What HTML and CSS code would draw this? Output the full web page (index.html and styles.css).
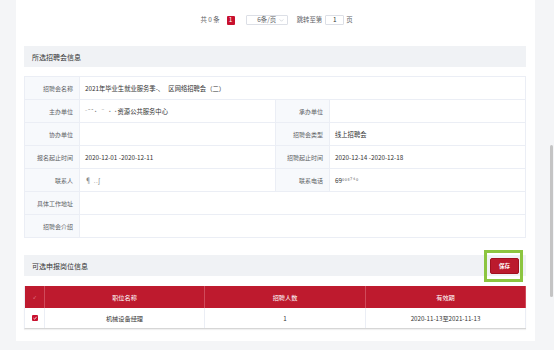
FILE: index.html
```html
<!DOCTYPE html>
<html lang="zh">
<head>
<meta charset="utf-8">
<link rel="stylesheet" href="styles.css">
</head>
<body>
<div class="page">
  <main class="panel">
    <div class="pager">
      <span class="total">共 0 条</span>
      <span class="cur">1</span>
      <span class="size">6条/页<svg class="arrow" viewBox="0 0 6 4" width="5" height="3"><path d="M0.5 0.5 L3 3 L5.5 0.5" fill="none" stroke="#c0c4cc" stroke-width="0.8"/></svg></span>
      <span class="jump">跳转至第</span>
      <span class="inp">1</span>
      <span class="unit">页</span>
    </div>

    <div class="sec-head"><span>所选招聘会信息</span></div>
    <div class="info">
      <div class="lbl">招聘会名称</div><div class="val span3">2021年毕业生就业服务季-、&nbsp;&nbsp;&nbsp;区网络招聘会（二）</div>
      <div class="lbl">主办单位</div><div class="val"><span class="blur">⁻˜ˆ˙ ˉ ˙ ˙</span>资源公共服务中心</div>
      <div class="lbl">承办单位</div><div class="val"></div>
      <div class="lbl">协办单位</div><div class="val"></div>
      <div class="lbl">招聘会类型</div><div class="val">线上招聘会</div>
      <div class="lbl">报名起止时间</div><div class="val">2020-12-01 -2020-12-11</div>
      <div class="lbl">招聘起止时间</div><div class="val">2020-12-14 -2020-12-18</div>
      <div class="lbl">联系人</div><div class="val"><span class="blur">¶ ..ʃ</span></div>
      <div class="lbl">联系电话</div><div class="val">69<span class="blur">⁰⁰⁵⁷⁴⁰</span></div>
      <div class="lbl">具体工作地址</div><div class="val span3"></div>
      <div class="lbl">招聘会介绍</div><div class="val span3"></div>
    </div>

    <div class="sec-head sec-head2"><span>可选申报岗位信息</span><button class="btn">保存</button></div>
    <div class="jobs">
      <div class="th chk"><span class="tick">✓</span></div>
      <div class="th">职位名称</div>
      <div class="th">招聘人数</div>
      <div class="th">有效期</div>
      <div class="td chk"><span class="box"><svg viewBox="0 0 6 6" width="6" height="6"><path d="M1.5 3.2 L2.6 4.2 L4.6 1.8" fill="none" stroke="#fff" stroke-width="0.8"/></svg></span></div>
      <div class="td">机械设备经理</div>
      <div class="td">1</div>
      <div class="td">2020-11-13至2021-11-13</div>
    </div>
  </main>
  <div class="scroll"><div class="thumb"></div></div>
</div>
</body>
</html>
```

FILE: styles.css
```css
* { box-sizing: border-box; }
html, body {
  margin: 0;
  padding: 0;
  height: 350px;
  overflow: hidden;
  background: #f4f5f7;
  font-family: "Noto Sans CJK SC", "Noto Sans", sans-serif;
  color: #333;
}
.page {
  display: flex;
  align-items: flex-start;
  padding-left: 16px;
}
.panel {
  width: 519px;
  background: #fff;
  padding: 0 9px 12px 8px;
}
.pager {
  height: 40px;
  display: flex;
  justify-content: center;
  align-items: center;
  font-size: 6.4px;
  line-height: 1;
  color: #606266;
  padding-left: 3px;
}
.total { margin-right: 7px; }
.cur {
  width: 8px;
  height: 9px;
  background: #c8102e;
  color: #fff;
  display: flex;
  align-items: center;
  justify-content: center;
  border-radius: 1px;
  margin-right: 11px;
}
.size {
  width: 42px;
  height: 10px;
  border: 1px solid #dcdfe6;
  border-radius: 1px;
  display: flex;
  align-items: center;
  justify-content: center;
  position: relative;
  margin-right: 9px;
}
.arrow { position: absolute; right: 3px; top: 3px; }
.jump { margin-right: 3px; }
.inp {
  width: 19px;
  height: 10px;
  border: 1px solid #dcdfe6;
  border-radius: 1px;
  display: flex;
  align-items: center;
  justify-content: center;
  color: #333;
  margin-right: 2px;
}
.sec-head {
  margin-top: 6px;
  height: 21px;
  background: #f0f2f5;
  display: flex;
  align-items: center;
  padding-left: 8px;
  font-size: 7px;
  color: #333;
}
.info {
  margin-top: 9px;
  display: grid;
  grid-template-columns: 55px 196px 54px 1fr;
  grid-auto-rows: 23px;
  border-top: 1px solid #ebeef5;
  border-left: 1px solid #ebeef5;
  font-size: 6px;
}
.lbl, .val {
  border-right: 1px solid #ebeef5;
  border-bottom: 1px solid #ebeef5;
  display: flex;
  align-items: center;
}
.lbl {
  background: #f7f9fc;
  justify-content: flex-end;
  padding-right: 6px;
  color: #606266;
}
.val { padding-left: 5px; color: #333; font-size: 6.3px; }
.span3 { grid-column: span 3; }
.blur { color: #888; letter-spacing: 0.5px; }
.sec-head2 {
  margin-top: 17px;
  justify-content: space-between;
  padding-right: 7px;
}
.btn {
  position: relative;
  width: 29px;
  height: 16px;
  padding: 0;
  border: 1px solid #a0101f;
  border-radius: 2px;
  background: #bb1a2d;
  color: #fff;
  font-family: inherit;
  font-size: 5.5px;
  font-weight: bold;
}
.btn::after {
  content: "";
  position: absolute;
  left: -7px;
  right: -5px;
  top: -9px;
  bottom: -9px;
  border: 3px solid #8cc540;
}
.jobs {
  margin-top: 10px;
  display: grid;
  grid-template-columns: 20px 160px 161px 1fr;
  grid-template-rows: 22px 20px;
  font-size: 6.2px;
  border-left: 1px solid #ebeef5;
  border-bottom: 1px solid #d6d6d6;
  box-shadow: 0 1px 1px rgba(0,0,0,0.06);
}
.th, .td {
  display: flex;
  align-items: center;
  justify-content: center;
}
.th {
  background: #be1a2e;
  color: #fff;
  border-right: 1px solid #d04a5a;
}
.th:last-of-type { border-right: none; }
.td {
  border-right: 1px solid #ebeef5;
  color: #333;
}
.tick { color: #e89aa4; font-size: 4px; }
.box {
  width: 6px;
  height: 6px;
  background: #c8102e;
  border-radius: 1px;
  display: flex;
}
.scroll {
  width: 19px;
  height: 350px;
  padding-left: 15px;
  padding-top: 145px;
}
.thumb {
  width: 3px;
  height: 152px;
  background: #c4c4c4;
  border-radius: 2px;
}
```
